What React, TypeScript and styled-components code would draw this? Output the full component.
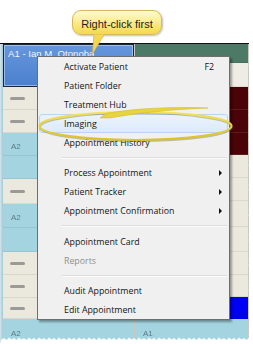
import React from "react";
import styled, { createGlobalStyle } from "styled-components";

const Global = createGlobalStyle`
  html, body { margin: 0; padding: 0; background: #ffffff; }
  body { width: 253px; height: 344px; overflow: hidden; }
`;

const Stage = styled.div`
  position: relative;
  width: 253px;
  height: 344px;
  overflow: hidden;
  background: #ffffff;
`;

const CalloutArea = styled.div`
  height: 43px;
  box-sizing: border-box;
  padding: 10px 0 0 72px;
`;

const Callout = styled.div`
  position: relative;
  z-index: 5;
  width: 90px;
  height: 25px;
  box-sizing: border-box;
  border: 1px solid #d8b85c;
  border-radius: 9px;
  background: linear-gradient(#fffbd2, #fbe987 55%, #f5d84e);
  box-shadow: 1px 1px 2px rgba(0, 0, 0, 0.25);
  display: flex;
  align-items: center;
  justify-content: center;
  padding-top: 2px;
  font-family: "Liberation Sans", Arial, sans-serif;
  font-size: 11px;
  color: #1e1e1e;
`;

const TailSvg = styled.svg`
  position: absolute;
  left: 17px;
  top: 22px;
  overflow: visible;
`;

const Schedule = styled.div`
  display: flex;
  width: 249px;
  height: 301px;
  border-top: 1px solid #111;
`;

const Strip = styled.div`
  width: 3px;
  background: linear-gradient(90deg, #d7e6ec, #9fc9d6);
`;

const Column = styled.div<{ $w?: number }>`
  display: flex;
  flex-direction: column;
  ${(p) => (p.$w ? `width: ${p.$w}px;` : "flex: 1;")}
  border-right: 1px solid #c9c9c2;
`;

const tones: Record<string, string> = {
  beige: "#ebe8de",
  cyan: "#a3d4df",
  green: "#4d7a66",
  light: "#eeece4",
  maroon: "#4a0306",
  blue: "#0000f2",
};

const Slot = styled.div<{ $h?: number; $tone: string }>`
  box-sizing: border-box;
  ${(p) => (p.$h ? `height: ${p.$h}px;` : "flex: 1;")}
  background: ${(p) => tones[p.$tone]};
  border-bottom: 1px solid
    ${(p) => (p.$tone === "maroon" ? "#5e1a1c" : "rgba(0,0,0,0.07)")};
  display: flex;
  align-items: center;
  padding-left: 7px;
`;

const Selected = styled.div`
  box-sizing: border-box;
  height: 43px;
  border: 1px solid #1d2533;
  box-shadow: inset 0 0 0 1px rgba(210, 228, 255, 0.55);
  background: linear-gradient(#6597dd, #4c80cd);
  font-family: "Liberation Sans", Arial, sans-serif;
  font-size: 9.6px;
  color: #f3f6ff;
  padding: 3px 0 0 4px;
  white-space: nowrap;
`;

const Dash = styled.span`
  width: 15px;
  height: 3px;
  border-radius: 2px;
  background: #9b9a96;
  filter: blur(0.7px);
`;

const CellLabel = styled.span`
  font-family: "Liberation Sans", Arial, sans-serif;
  font-size: 8px;
  color: #5c7a86;
  filter: blur(0.5px);
  margin-left: 1px;
  margin-top: 4px;
`;

const Menu = styled.div`
  position: absolute;
  z-index: 3;
  left: 37px;
  top: 56px;
  width: 193px;
  box-sizing: border-box;
  border: 1px solid #6e6e6e;
  background: #f0f0f0;
  box-shadow: 2px 2px 2px rgba(0, 0, 0, 0.35);
  font-family: "Open Sans", "Noto Sans", sans-serif;
  font-size: 8.8px;
  color: #141414;
`;

const Item = styled.div<{ $disabled?: boolean; $hot?: boolean }>`
  position: relative;
  height: 19px;
  box-sizing: border-box;
  display: flex;
  align-items: center;
  padding: 0 6px 0 25px;
  margin: 0 1px;
  ${(p) => (p.$disabled ? "color: #8f8f8f;" : "")}
  ${(p) =>
    p.$hot
      ? `background: linear-gradient(#eaf3fc, #dcebf9);
         border: 1px solid #b8d6f3;
         border-radius: 3px;
         padding-left: 24px;`
      : ""}
`;

const Label = styled.span`
  flex: 1;
  white-space: nowrap;
`;

const Shortcut = styled.span`
  margin-right: 8px;
`;

const SubArrow = styled.span`
  width: 0;
  height: 0;
  border-top: 3px solid transparent;
  border-bottom: 3px solid transparent;
  border-left: 3px solid #111;
`;

const Separator = styled.div<{ $h: number }>`
  height: ${(p) => p.$h}px;
  display: flex;
  align-items: center;
  padding: 0 2px 0 24px;
  &::after {
    content: "";
    flex: 1;
    height: 1px;
    background: #dddddd;
    border-bottom: 1px solid #fbfbfb;
  }
`;

const Overlay = styled.svg`
  position: absolute;
  left: 0;
  top: 0;
  z-index: 6;
  pointer-events: none;
`;

type Entry =
  | { kind: "item"; label: string; shortcut?: string; sub?: boolean; disabled?: boolean; hot?: boolean }
  | { kind: "sep"; h: number };

const menu: Entry[] = [
  { kind: "item", label: "Activate Patient", shortcut: "F2" },
  { kind: "item", label: "Patient Folder" },
  { kind: "item", label: "Treatment Hub" },
  { kind: "item", label: "Imaging", hot: true },
  { kind: "item", label: "Appointment History" },
  { kind: "sep", h: 11 },
  { kind: "item", label: "Process Appointment", sub: true },
  { kind: "item", label: "Patient Tracker", sub: true },
  { kind: "item", label: "Appointment Confirmation", sub: true },
  { kind: "sep", h: 12 },
  { kind: "item", label: "Appointment Card" },
  { kind: "item", label: "Reports", disabled: true },
  { kind: "sep", h: 11 },
  { kind: "item", label: "Audit Appointment" },
  { kind: "item", label: "Edit Appointment" },
];

type SlotDef = { h?: number; tone: string; dash?: boolean; label?: string };

const leftSlots: SlotDef[] = [
  { h: 23, tone: "beige", dash: true },
  { h: 23, tone: "beige", dash: true },
  { h: 23, tone: "cyan", label: "A2" },
  { h: 23, tone: "cyan" },
  { h: 25, tone: "beige", dash: true },
  { h: 24, tone: "cyan", label: "A2" },
  { h: 24, tone: "cyan" },
  { h: 23, tone: "beige", dash: true },
  { h: 23, tone: "beige", dash: true },
  { h: 21, tone: "beige", dash: true },
  { tone: "cyan", label: "A2" },
];

const rightSlots: SlotDef[] = [
  { h: 19, tone: "green" },
  { h: 24, tone: "light" },
  { h: 23, tone: "maroon" },
  { h: 23, tone: "maroon" },
  { h: 22, tone: "maroon" },
  { h: 23, tone: "beige" },
  { h: 23, tone: "beige" },
  { h: 26, tone: "beige" },
  { h: 25, tone: "beige" },
  { h: 23, tone: "beige" },
  { h: 22, tone: "beige" },
  { h: 22, tone: "blue" },
  { tone: "cyan", label: "A1" },
];

function renderSlot(s: SlotDef, i: number) {
  return (
    <Slot key={i} $h={s.h} $tone={s.tone}>
      {s.dash && <Dash />}
      {s.label && <CellLabel>{s.label}</CellLabel>}
    </Slot>
  );
}

function tornPoints(): string {
  const pts: string[] = [];
  // right edge, top to bottom
  pts.push("253,40");
  let k = 0;
  for (let y = 40; y <= 338; y += 2.5) {
    const j = ((k * 7) % 5) / 5;
    const x = k % 2 === 0 ? 248.3 + j : 250 + j;
    pts.push(`${x.toFixed(1)},${y.toFixed(1)}`);
    k++;
  }
  // bottom edge, right to left
  k = 0;
  for (let x = 249; x >= 0; x -= 2.5) {
    const j = ((k * 3) % 4) / 4;
    const y = k % 2 === 0 ? 337.6 + j : 339.4 + j;
    pts.push(`${x.toFixed(1)},${y.toFixed(1)}`);
    k++;
  }
  pts.push("0,344");
  pts.push("253,344");
  return pts.join(" ");
}

export default function App() {
  return (
    <>
      <Global />
      <Stage>
        <CalloutArea>
          <Callout>
            Right-click first
            <TailSvg width="18" height="22" viewBox="0 0 18 22">
              <defs>
                <linearGradient id="tailg" x1="0" y1="0" x2="0" y2="1">
                  <stop offset="0" stopColor="#f6da52" />
                  <stop offset="1" stopColor="#f3d246" />
                </linearGradient>
              </defs>
              <polygon points="4,1.5 14,1.5 2.5,21" fill="url(#tailg)" />
              <polyline points="4,1.8 2.5,21 14,1.8" fill="none" stroke="#d6b45a" strokeWidth="0.8" />
            </TailSvg>
          </Callout>
        </CalloutArea>
        <Schedule>
          <Strip />
          <Column $w={131}>
            <Selected>A1 - Ian M. Otonoha</Selected>
            {leftSlots.map(renderSlot)}
          </Column>
          <Column>{rightSlots.map(renderSlot)}</Column>
        </Schedule>
        <Menu>
          {menu.map((e, i) =>
            e.kind === "sep" ? (
              <Separator key={i} $h={e.h} />
            ) : (
              <Item key={i} $disabled={e.disabled} $hot={e.hot}>
                <Label>{e.label}</Label>
                {e.shortcut && <Shortcut>{e.shortcut}</Shortcut>}
                {e.sub && <SubArrow />}
              </Item>
            )
          )}
        </Menu>
        <Overlay width="253" height="344" viewBox="0 0 253 344">
          <defs>
            <linearGradient id="ring" x1="0" y1="0" x2="0" y2="1">
              <stop offset="0" stopColor="#f2e35a" />
              <stop offset="1" stopColor="#d9c22c" />
            </linearGradient>
          </defs>
          <ellipse cx="136" cy="127" rx="96" ry="14" fill="none" stroke="rgba(90,90,60,0.35)" strokeWidth="2.2" />
          <ellipse cx="135.5" cy="126" rx="96" ry="14" fill="none" stroke="url(#ring)" strokeWidth="2.2" />
          <path
            d="M100,118 L106,113.5 C130,109 165,106.5 208,108 C170,109.5 138,113 110,118 Z"
            fill="#e8d43e"
            stroke="#cdb52c"
            strokeWidth="0.5"
          />
          <polygon points={tornPoints()} fill="#ffffff" />
        </Overlay>
      </Stage>
    </>
  );
}
